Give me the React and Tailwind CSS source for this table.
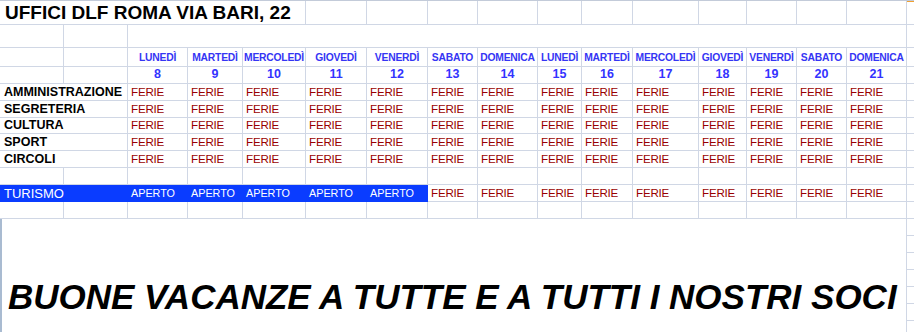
const DAYS = [
  ['LUNEDÌ', 8], ['MARTEDÌ', 9], ['MERCOLEDÌ', 10], ['GIOVEDÌ', 11], ['VENERDÌ', 12],
  ['SABATO', 13], ['DOMENICA', 14], ['LUNEDÌ', 15], ['MARTEDÌ', 16], ['MERCOLEDÌ', 17],
  ['GIOVEDÌ', 18], ['VENERDÌ', 19], ['SABATO', 20], ['DOMENICA', 21],
];

const OFFICES = [
  { name: 'AMMINISTRAZIONE', h: 'h-[17px]' },
  { name: 'SEGRETERIA', h: 'h-[16px]' },
  { name: 'CULTURA', h: 'h-[17px]' },
  { name: 'SPORT', h: 'h-[17px]' },
  { name: 'CIRCOLI', h: 'h-[17px]' },
];

// column widths of the sheet, A..P plus the sliver of Q on the right
const ROW =
  'grid grid-cols-[64px_64px_60px_55px_63px_61px_61px_50px_60px_44px_51px_66px_48px_50px_50px_60px_7px]';
const CELL = 'border-r border-b border-[#d0d7e5] whitespace-nowrap overflow-visible';
const EDGE = 'border-b border-[#d0d7e5]';

function Ferie() {
  return (
    <div className={`${CELL} pl-[3px] text-[11.6px] leading-[16px] tracking-[-0.2px] text-[#990000]`}>FERIE</div>
  );
}

function Empty({ h }) {
  return (
    <div className={`${ROW} ${h}`}>
      {Array.from({ length: 16 }).map((_, i) => (
        <div key={i} className={CELL} />
      ))}
      <div className={EDGE} />
    </div>
  );
}

export default function App() {
  return (
    <div className="w-[914px] h-[332px] overflow-hidden bg-white font-['Liberation_Sans',Arial,sans-serif] text-black">
      {/* Title */}
      <div className={`${ROW} h-[25px] border-t border-[#c3cbd9]`}>
        <div className={`${CELL} col-span-5 pl-[5px] text-[19px] font-bold leading-[23px]`}>
          UFFICI DLF ROMA VIA BARI, 22
        </div>
        {Array.from({ length: 11 }).map((_, i) => (
          <div key={i} className={CELL} />
        ))}
        <div className={`${EDGE} shadow-[inset_0_1px_0_#f0a030]`} />
      </div>

      {/* spacer row */}
      <div className={`${ROW} h-[23px]`}>
        <div className={CELL} />
        <div className={CELL} />
        <div className={`${CELL} col-span-14`} />
        <div className={EDGE} />
      </div>

      {/* Day names */}
      <div className={`${ROW} h-[18px]`}>
        <div className={CELL} />
        <div className={CELL} />
        {DAYS.map(([d], i) => (
          <div
            key={i}
            className={`${CELL} pt-px text-center text-[10.3px] font-bold leading-[17px] tracking-[-0.2px] text-[#3535f4]`}
          >
            {d}
          </div>
        ))}
        <div className={EDGE} />
      </div>

      {/* Day numbers */}
      <div className={`${ROW} h-[18px]`}>
        <div className={CELL} />
        <div className={CELL} />
        {DAYS.map(([, n], i) => (
          <div key={i} className={`${CELL} text-center text-[12.5px] font-bold leading-[17px] text-[#3333ff]`}>
            {n}
          </div>
        ))}
        <div className={EDGE} />
      </div>

      {/* Offices */}
      {OFFICES.map((o) => (
        <div key={o.name} className={`${ROW} ${o.h}`}>
          <div className={`${CELL} col-span-2 pl-[4px] text-[12.5px] font-bold leading-[16px]`}>{o.name}</div>
          {DAYS.map((_, i) => (
            <Ferie key={i} />
          ))}
          <div className={EDGE} />
        </div>
      ))}

      <Empty h="h-[17px]" />

      {/* Turismo */}
      <div className={`${ROW} h-[17px]`}>
        <div className="col-span-2 bg-[#0a3cff] pl-[4px] text-[13px] leading-[17px] text-white whitespace-nowrap">
          TURISMO
        </div>
        {Array.from({ length: 5 }).map((_, i) => (
          <div key={i} className="bg-[#0a3cff] pl-[3px] text-[10.8px] leading-[17px] text-white whitespace-nowrap">
            APERTO
          </div>
        ))}
        {Array.from({ length: 9 }).map((_, i) => (
          <Ferie key={i} />
        ))}
        <div className={EDGE} />
      </div>

      <Empty h="h-[17px]" />

      {/* Greeting text box */}
      <div className="flex h-[113px]">
        <div className="w-[907px] shrink-0 border-l-2 border-r border-l-[#a9bbd1] border-r-[#d0d7e5] bg-white pt-[60px] pl-[6px]">
          <p className="whitespace-nowrap text-[35px] font-bold italic leading-none">
            BUONE VACANZE A TUTTE E A TUTTI I NOSTRI SOCI
          </p>
        </div>
        <div className="flex-1">
          {Array.from({ length: 7 }).map((_, i) => (
            <div key={i} className={`h-[17px] ${EDGE}`} />
          ))}
        </div>
      </div>
    </div>
  );
}
